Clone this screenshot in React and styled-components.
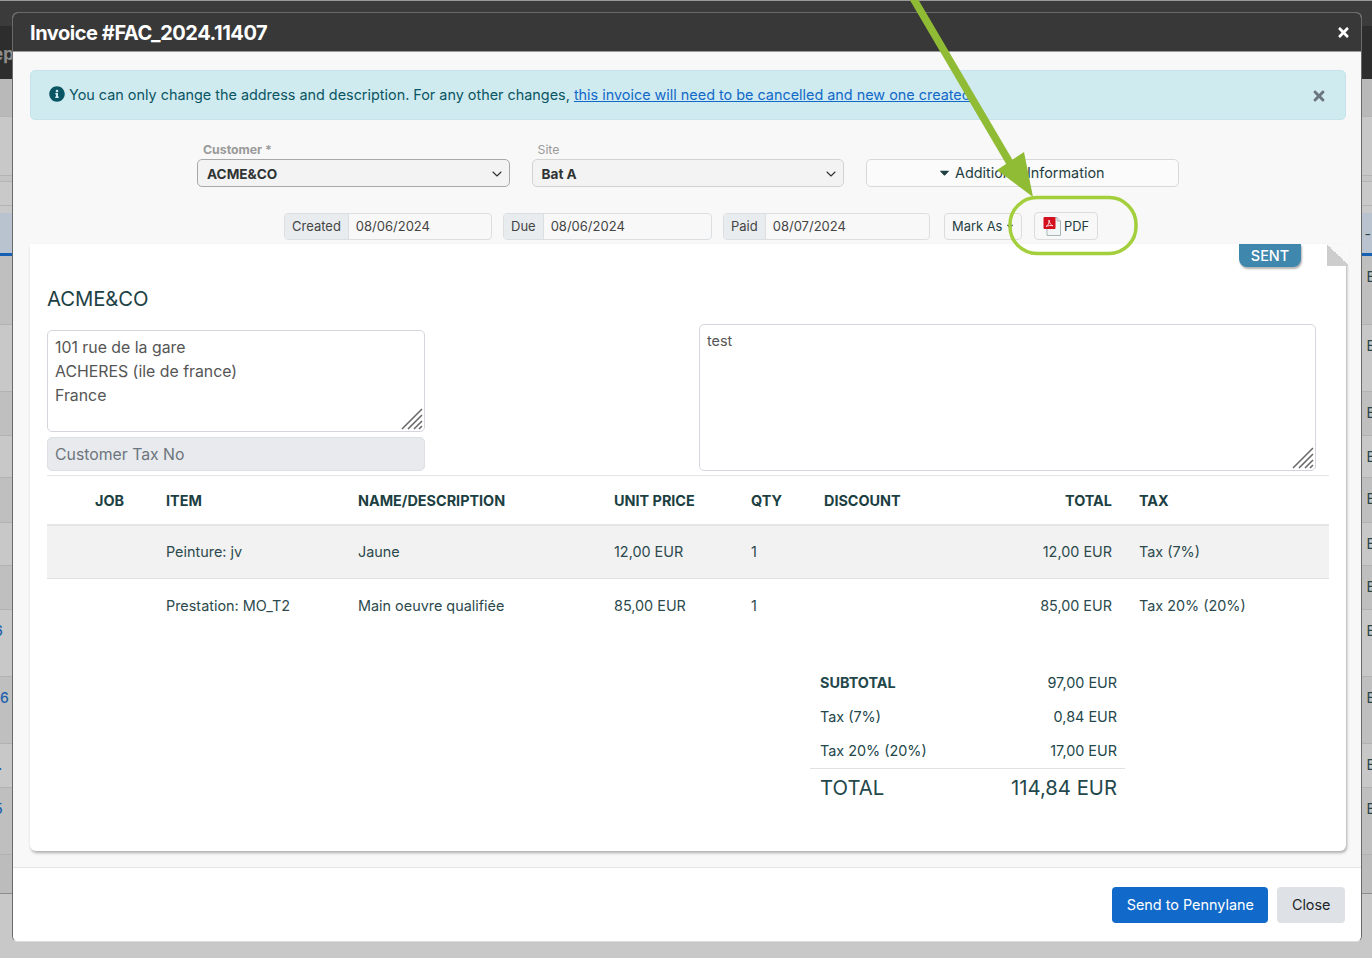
import React from 'react';
import styled, {createGlobalStyle} from 'styled-components';
import {FaTimes, FaInfoCircle, FaCaretDown} from 'react-icons/fa';
import {ChevronDown} from 'lucide-react';

const GlobalStyle = createGlobalStyle`
    html, body {
        margin: 0;
        padding: 0;
        height: 958px;
        overflow: hidden;
        background: #c8c8c8;
        font-family: Inter, "Liberation Sans", sans-serif;
        color: #1f3f42;
    }
`;

const BACK_ROWS = [
    {height: 69, dark: true},
    {height: 67, dark: false},
    {height: 44, dark: true},
    {height: 42, dark: false},
    {height: 45, dark: true},
    {height: 43, dark: false},
    {height: 44, dark: true},
    {height: 67, dark: false, digit: '6', shift: -6},
    {height: 67, dark: true, digit: '6', shift: 0},
    {height: 44, dark: false, digit: '.', shift: -2},
    {height: 67, dark: true, digit: '5', shift: -6}
];

const LINES = [
    {job: '', item: 'Peinture: jv', name: 'Jaune', price: '12,00 EUR', qty: '1', total: '12,00 EUR', tax: 'Tax (7%)'},
    {job: '', item: 'Prestation: MO_T2', name: 'Main oeuvre qualifiée', price: '85,00 EUR', qty: '1', total: '85,00 EUR', tax: 'Tax 20% (20%)'}
];

const Page = styled.div`
    position: relative;
    width: 1372px;
    height: 958px;
    overflow: hidden;
`;

const Backdrop = styled.div`
    display: flex;
    flex-direction: column;
    height: 100%;
    background: #c8c8c8;
`;

const BackNav = styled.div`
    height: 79px;
    border-top: 1px solid #9a9a9a;
    background: linear-gradient(#3b3b3b 25px, #2d2d2d 25px);
    color: #8e8e8e;
    font-size: 17px;
    font-weight: 700;
    display: flex;
    align-items: center;
    padding-top: 28px;
    box-sizing: border-box;
    span {
        margin-left: -7px;
    }
`;

const BackBand = styled.div`
    height: ${props => props.$height}px;
    background: ${props => props.$color};
    border-bottom: 1px solid #b4b4b4;
    box-sizing: border-box;
`;

const BackHead = styled.div`
    height: 43px;
    margin-top: 7px;
    background: #b9c3d0;
    border-bottom: 3px solid #1660b4;
    box-sizing: border-box;
    display: flex;
    justify-content: flex-end;
    align-items: center;
    color: #2c4648;
    font-size: 14px;
    padding-right: 1px;
`;

const BackRow = styled.div`
    height: ${props => props.$height}px;
    background: ${props => (props.$dark ? '#bfbfbf' : '#c8c8c8')};
    border-bottom: 1px solid #b2b2b2;
    box-sizing: border-box;
    display: flex;
    align-items: flex-start;
    justify-content: space-between;
    padding-top: 12px;
    font-size: 14px;
`;

const BackDigit = styled.span`
    color: #1c5fae;
    font-size: 14px;
    font-weight: 500;
    margin-left: ${props => props.$shift}px;
`;

const BackLetter = styled.span`
    color: #2c4648;
    margin-right: -3px;
    margin-left: auto;
`;

const BackTail = styled.div`
    height: 39px;
    background: #bcbcbc;
    border-bottom: 1px solid #8d8d8d;
    box-sizing: border-box;
`;

const Modal = styled.div`
    position: absolute;
    left: 12px;
    top: 12px;
    width: 1350px;
    height: 930px;
    display: flex;
    flex-direction: column;
    box-sizing: border-box;
    border: 1px solid #6a6a6a;
    border-bottom-color: #dcdcdc;
    border-radius: 6px;
    overflow: hidden;
    background: #fff;
`;

const ModalHeader = styled.div`
    height: 39px;
    flex: none;
    background: #383838;
    border-bottom: 1px solid #9a9a9a;
    box-sizing: border-box;
    color: #fff;
    display: flex;
    align-items: center;
    justify-content: space-between;
    padding: 1px 10px 0 17px;
`;

const ModalTitle = styled.div`
    font-size: 20px;
    font-weight: 700;
    letter-spacing: -0.45px;
`;

const ModalBody = styled.div`
    flex: 1;
    background: #f8f8f8;
    padding: 18px 15px 16px 17px;
    display: flex;
    flex-direction: column;
    min-height: 0;
`;

const Alert = styled.div`
    height: 50px;
    flex: none;
    box-sizing: border-box;
    background: #d0ebf0;
    border: 1px solid #c4e4ea;
    border-radius: 5px;
    color: #0a5563;
    font-size: 14.4px;
    display: flex;
    align-items: center;
    padding: 0 18px 2px 18px;
    gap: 4px;
    a {
        color: #1169c8;
        text-decoration: underline;
    }
`;

const AlertText = styled.div`
    flex: 1;
    white-space: nowrap;
`;

const AlertClose = styled.span`
    color: #6b767c;
    display: flex;
    font-size: 16px;
    margin-top: 4px;
`;

const FormRow = styled.div`
    display: grid;
    grid-template-columns: repeat(3, 312.5px);
    column-gap: 22px;
    padding-left: 167px;
    margin-top: 23px;
    align-items: end;
`;

const Label = styled.div`
    color: #9a9a9a;
    font-size: 12.3px;
    font-weight: ${props => (props.$strong ? 700 : 400)};
    padding-left: 6px;
    height: 16px;
    line-height: 14px;
`;

const Select = styled.div`
    height: 28px;
    box-sizing: border-box;
    background: #f3f3f3;
    border: 1px solid ${props => (props.$strong ? '#a8a8a8' : '#d2d2d2')};
    border-radius: 5px;
    display: flex;
    align-items: center;
    justify-content: space-between;
    padding: 1px 4px 0 9px;
    font-size: 13.6px;
    font-weight: 700;
    color: #303333;
`;

const InfoButton = styled.div`
    height: 28px;
    box-sizing: border-box;
    background: #fbfbfb;
    border: 1px solid #d8d8d8;
    border-radius: 5px;
    display: flex;
    align-items: center;
    justify-content: center;
    gap: 3px;
    font-size: 14.4px;
    padding: 0 3px 1px 0;
`;

const DateRow = styled.div`
    display: flex;
    align-items: center;
    padding-left: 254px;
    margin-top: 25px;
    margin-bottom: 4px;
`;

const DateGroup = styled.div`
    width: ${props => props.$width}px;
    margin-right: 11px;
    height: 27px;
    box-sizing: border-box;
    border: 1px solid #dcdfe2;
    border-radius: 4px;
    display: flex;
    align-items: center;
    overflow: hidden;
    font-size: 13px;
    color: #444;
`;

const DateLabel = styled.div`
    background: #e9ecef;
    align-self: stretch;
    display: flex;
    align-items: center;
    padding: 0 7px;
    border-right: 1px solid #dcdfe2;
`;

const DateValue = styled.div`
    padding-left: 7px;
`;

const SmallButton = styled.div`
    height: ${props => props.$height}px;
    width: ${props => props.$width}px;
    margin-left: ${props => props.$left}px;
    box-sizing: border-box;
    border: 1px solid #dcdcdc;
    border-radius: 4px;
    display: flex;
    align-items: center;
    gap: ${props => props.$gap}px;
    padding-left: 7px;
    font-size: 12.9px;
    flex: none;
`;

const Sheet = styled.div`
    position: relative;
    flex: 1;
    background: #fff;
    border-radius: 0 0 6px 6px;
    box-shadow: 1px 2px 3px rgba(0, 0, 0, 0.3);
    padding: 0 17px;
    min-height: 0;
    &::before {
        content: '';
        position: absolute;
        right: -3px;
        top: 0;
        width: 22px;
        height: 22px;
        background: linear-gradient(to top right, #cdcdcd 50%, #f8f8f8 50%);
    }
`;

const StatusBadge = styled.div`
    position: absolute;
    right: 45px;
    top: 0;
    width: 62px;
    height: 23px;
    background: #3f87ad;
    color: #fff;
    font-size: 14.4px;
    font-weight: 500;
    border-radius: 0 0 8px 8px;
    box-shadow: 1px 2px 2px rgba(0, 0, 0, 0.3);
    display: flex;
    align-items: center;
    justify-content: center;
`;

const CompanyName = styled.div`
    font-size: 20.3px;
    line-height: 24px;
    padding-top: 43px;
    color: #1c4145;
    letter-spacing: -0.1px;
`;

const AddressGrid = styled.div`
    display: grid;
    grid-template-columns: 377.5px 617px;
    justify-content: space-between;
    padding-right: 13px;
    height: 165px;
    box-sizing: border-box;
    border-bottom: 1px solid #e4e6e8;
`;

const AddressColumn = styled.div`
    padding-top: ${props => props.$top}px;
    display: flex;
    flex-direction: column;
    gap: 5px;
`;

const TextBox = styled.div`
    position: relative;
    height: ${props => props.$height}px;
    box-sizing: border-box;
    border: 1px solid #d3d7dd;
    border-radius: 5px;
    padding: ${props => props.$pad};
    background: #fff;
    font-size: ${props => props.$size}px;
    line-height: 24px;
    color: #555;
    white-space: pre-line;
`;

const TaxInput = styled.div`
    height: 34px;
    box-sizing: border-box;
    background: #e8eaed;
    border: 1px solid #dde0e5;
    border-radius: 5px;
    padding-left: 7px;
    display: flex;
    align-items: center;
    color: #6c757d;
    font-size: 15.8px;
`;

const Grip = styled.svg`
    position: absolute;
    right: 1px;
    bottom: 1px;
    width: 22px;
    height: 22px;
`;

const TableRow = styled.div`
    display: grid;
    grid-template-columns: 77px 234px 256px 137px 73px 288px 217px;
    align-items: center;
    height: ${props => props.$height}px;
    padding-bottom: ${props => (props.$shaded ? 1 : 0)}px;
    box-sizing: border-box;
    background: ${props => (props.$shaded ? '#f2f2f2' : 'transparent')};
    border-bottom: ${props => props.$border};
    font-size: 14.4px;
    font-weight: ${props => (props.$head ? 700 : 400)};
    color: ${props => (props.$head ? '#1c3f42' : '#2c4a4d')};
`;

const Cell = styled.div`
    text-align: ${props => (props.$right ? 'right' : 'left')};
    padding-left: ${props => props.$pad || 0}px;
`;

const TableSplit = styled.div`
    display: flex;
    justify-content: space-between;
`;

const TotalsBlock = styled.div`
    width: 315px;
    margin: 34px 0 0 763px;
`;

const TotalRow = styled.div`
    display: flex;
    justify-content: space-between;
    align-items: center;
    height: ${props => (props.$grand ? 37 : 34)}px;
    margin-top: ${props => (props.$grand ? 1 : 0)}px;
    padding: 0 8px 0 10px;
    font-size: ${props => (props.$grand ? 20.3 : 14.4)}px;
    font-weight: ${props => (props.$bold ? 700 : 400)};
    border-top: ${props => (props.$grand ? '1px solid #dfe2e4' : 'none')};
    color: #23474a;
`;

const TotalAmount = styled.span`
    font-weight: 400;
`;

const ModalFooter = styled.div`
    height: 74px;
    flex: none;
    box-sizing: border-box;
    background: #fff;
    border-top: 1px solid #e3e3e3;
    display: flex;
    align-items: center;
    justify-content: flex-end;
    gap: 9px;
    padding: 1px 16px 0 0;
`;

const FooterButton = styled.div`
    height: 36px;
    box-sizing: border-box;
    padding: 0 14.5px 2px;
    border-radius: 4px;
    background: ${props => (props.$primary ? '#116ac9' : '#dee2e6')};
    color: ${props => (props.$primary ? '#fff' : '#212529')};
    font-size: 14.4px;
    display: flex;
    align-items: center;
`;

const Annotation = styled.svg`
    position: absolute;
    left: 0;
    top: 0;
    width: 1372px;
    height: 958px;
    pointer-events: none;
`;

const ResizeGrip = () => (
    <Grip viewBox="0 0 22 22">
        <path d="M1 21 L21 1 M7 21 L21 7 M13 21 L21 13 M18 21 L21 18" stroke="#6a6a6a" strokeWidth="1.6" fill="none" />
    </Grip>
);

const PdfIcon = () => (
    <svg width="21" height="22" viewBox="0 0 21 22">
        <path d="M5 2.5 H15 L18.5 6 V20.5 H5 Z" fill="#f2f5f5" stroke="#a9b6b8" strokeWidth="1" />
        <path d="M15 2.5 V6 H18.5" fill="#dfe5e5" stroke="#a9b6b8" strokeWidth="0.8" />
        <rect x="1.5" y="2" width="12" height="12" rx="1" fill="#d5101e" />
        <path d="M4 11.5 C6 10.5 7.5 8 7 5 C7 8 9 10 11 10.8 C8.5 10.3 6 10.5 4 11.5 Z" fill="none" stroke="#fff" strokeWidth="0.8" />
    </svg>
);

export default function App() {
    return (
        <Page>
            <GlobalStyle />
            <Backdrop>
                <BackNav><span>ep</span></BackNav>
                <BackBand $height={38} $color="#b9b9b9" />
                <BackBand $height={59} $color="#c8c8c8" />
                <BackBand $height={6} $color="#c4c4c4" />
                <BackBand $height={24} $color="#c9c9c9" />
                <BackHead>-</BackHead>
                {BACK_ROWS.map((row, i) => (
                    <BackRow key={i} $height={row.height} $dark={row.dark}>
                        {row.digit ? <BackDigit $shift={row.shift}>{row.digit}</BackDigit> : null}
                        <BackLetter>E</BackLetter>
                    </BackRow>
                ))}
                <BackTail />
            </Backdrop>

            <Modal>
                <ModalHeader>
                    <ModalTitle>Invoice #FAC_2024.11407</ModalTitle>
                    <FaTimes size={15} />
                </ModalHeader>

                <ModalBody>
                    <Alert>
                        <FaInfoCircle size={16} />
                        <AlertText>
                            You can only change the address and description. For any other changes, <a href="#cancel">this invoice will need to be cancelled and new one created</a>
                        </AlertText>
                        <AlertClose><FaTimes /></AlertClose>
                    </Alert>

                    <FormRow>
                        <div>
                            <Label $strong>Customer *</Label>
                            <Select $strong>ACME&amp;CO<ChevronDown size={16} strokeWidth={1.6} /></Select>
                        </div>
                        <div>
                            <Label>Site</Label>
                            <Select>Bat A<ChevronDown size={16} strokeWidth={1.6} /></Select>
                        </div>
                        <InfoButton><FaCaretDown size={15} />Additional Information</InfoButton>
                    </FormRow>

                    <DateRow>
                        <DateGroup $width={208}><DateLabel>Created</DateLabel><DateValue>08/06/2024</DateValue></DateGroup>
                        <DateGroup $width={209}><DateLabel>Due</DateLabel><DateValue>08/06/2024</DateValue></DateGroup>
                        <DateGroup $width={207}><DateLabel>Paid</DateLabel><DateValue>08/07/2024</DateValue></DateGroup>
                        <SmallButton $width={78} $height={27} $left={3} $gap={3}>Mark As <FaCaretDown size={10} /></SmallButton>
                        <SmallButton $width={64} $height={28} $left={12} $gap={1}><PdfIcon />PDF</SmallButton>
                    </DateRow>

                    <Sheet>
                        <StatusBadge>SENT</StatusBadge>
                        <CompanyName>ACME&amp;CO</CompanyName>
                        <AddressGrid>
                            <AddressColumn $top={19}>
                                <TextBox $height={102} $pad="5px 7px" $size={15.85}>
                                    {'101 rue de la gare\nACHERES (ile de france)\nFrance'}
                                    <ResizeGrip />
                                </TextBox>
                                <TaxInput>Customer Tax No</TaxInput>
                            </AddressColumn>
                            <AddressColumn $top={13}>
                                <TextBox $height={147} $pad="4px 7px" $size={14.4}>
                                    test
                                    <ResizeGrip />
                                </TextBox>
                            </AddressColumn>
                        </AddressGrid>

                        <TableRow $head $height={50} $border="2px solid #e2e4e6">
                            <Cell $right>JOB</Cell>
                            <Cell $pad={42}>ITEM</Cell>
                            <Cell>NAME/DESCRIPTION</Cell>
                            <Cell>UNIT PRICE</Cell>
                            <Cell>QTY</Cell>
                            <Cell>
                                <TableSplit><span>DISCOUNT</span><span>TOTAL</span></TableSplit>
                            </Cell>
                            <Cell $pad={27}>TAX</Cell>
                        </TableRow>
                        {LINES.map((line, i) => (
                            <TableRow key={line.item} $height={i === 0 ? 53 : 52} $shaded={i === 0} $border={i === 0 ? '1px solid #dfe1e3' : 'none'}>
                                <Cell $right>{line.job}</Cell>
                                <Cell $pad={42}>{line.item}</Cell>
                                <Cell>{line.name}</Cell>
                                <Cell>{line.price}</Cell>
                                <Cell>{line.qty}</Cell>
                                <Cell $right>{line.total}</Cell>
                                <Cell $pad={27}>{line.tax}</Cell>
                            </TableRow>
                        ))}

                        <TotalsBlock>
                            <TotalRow $bold><span>SUBTOTAL</span><TotalAmount>97,00 EUR</TotalAmount></TotalRow>
                            <TotalRow><span>Tax (7%)</span><span>0,84 EUR</span></TotalRow>
                            <TotalRow><span>Tax 20% (20%)</span><span>17,00 EUR</span></TotalRow>
                            <TotalRow $grand><span>TOTAL</span><span>114,84 EUR</span></TotalRow>
                        </TotalsBlock>
                    </Sheet>
                </ModalBody>

                <ModalFooter>
                    <FooterButton $primary>Send to Pennylane</FooterButton>
                    <FooterButton>Close</FooterButton>
                </ModalFooter>
            </Modal>

            <Annotation viewBox="0 0 1372 958">
                <path d="M913 -2 L1010 163" stroke="#8fbc34" strokeWidth="7.5" fill="none" />
                <path d="M1024 152 L1033 197 L997 170 Z" fill="#8fbc34" />
                <rect x="1010" y="197.5" width="126" height="56" rx="27" fill="none" stroke="#a4cf3c" strokeWidth="3.5" />
            </Annotation>
        </Page>
    );
}
